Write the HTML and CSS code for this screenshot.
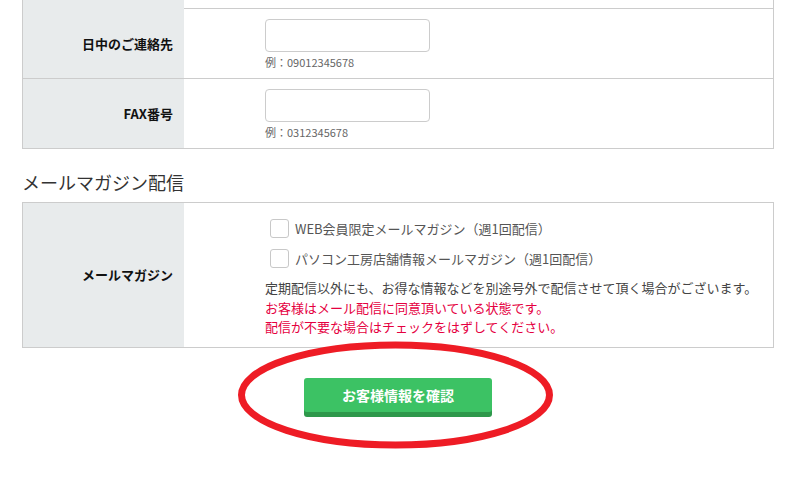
FILE: index.html
```html
<!DOCTYPE html>
<html lang="ja">
<head>
<meta charset="utf-8">
<title>お客様情報</title>
<link rel="stylesheet" href="styles.css">
</head>
<body>
<div class="page">
  <div class="form-table">
    <div class="row row-cut">
      <div class="label"></div>
      <div class="field"></div>
    </div>
    <div class="row">
      <div class="label">日中のご連絡先</div>
      <div class="field">
        <div class="input"></div>
        <div class="hint">例：09012345678</div>
      </div>
    </div>
    <div class="row">
      <div class="label">FAX番号</div>
      <div class="field">
        <div class="input"></div>
        <div class="hint">例：0312345678</div>
      </div>
    </div>
  </div>

  <h2 class="section-title">メールマガジン配信</h2>

  <div class="form-table">
    <div class="row">
      <div class="label">メールマガジン</div>
      <div class="field field-mail">
        <label class="check"><span class="box"></span><span>WEB会員限定メールマガジン（週1回配信）</span></label>
        <label class="check"><span class="box"></span><span>パソコン工房店舗情報メールマガジン（週1回配信）</span></label>
        <p class="note">定期配信以外にも、お得な情報などを別途号外で配信させて頂く場合がございます。<br><span class="red">お客様はメール配信に同意頂いている状態です。<br>配信が不要な場合はチェックをはずしてください。</span></p>
      </div>
    </div>
  </div>

  <div class="actions">
    <div class="btn-wrap">
      <button class="btn">お客様情報を確認</button>
      <svg class="circle" width="317" height="109" viewBox="0 0 317 109">
        <ellipse cx="158.5" cy="54" rx="154" ry="50" fill="none" stroke="#ee1c25" stroke-width="7"/>
      </svg>
    </div>
  </div>
</div>
</body>
</html>
```

FILE: styles.css
```css
* { box-sizing: border-box; }
html, body { margin: 0; padding: 0; background: #fff; }
body {
  font-family: "Noto Sans CJK JP", "Noto Sans", sans-serif;
  color: #333;
}
.page {
  width: 752px;
  margin-left: 22px;
  padding-bottom: 66px;
}
.form-table {
  border: 1px solid #cccccc;
  border-top: none;
}
.row {
  display: grid;
  grid-template-columns: 161px 1fr;
  border-top: 1px solid #cccccc;
}
.row-cut {
  border-top: none;
  height: 8px;
}
.label {
  background: #e8ebec;
  font-size: 13px;
  font-weight: bold;
  color: #111;
  text-align: right;
  padding-right: 11px;
  display: flex;
  align-items: center;
  justify-content: flex-end;
}
.field {
  padding: 10px 0 8px 81px;
}
.input {
  width: 165px;
  height: 33px;
  border: 1px solid #cccccc;
  border-radius: 4px;
  background: #fff;
}
.hint {
  font-size: 11px;
  line-height: 16px;
  color: #666;
  margin-top: 2px;
}
.section-title {
  margin: 20px 0 7px 0;
  font-size: 18px;
  line-height: 26px;
  font-weight: normal;
  color: #333;
}
.field-mail {
  padding: 10px 0 10px 81px;
}
.check {
  display: flex;
  align-items: center;
  height: 30px;
  font-size: 13px;
  color: #555;
  padding-left: 5px;
}
.box {
  width: 19px;
  height: 19px;
  border: 1px solid #c8c8c8;
  border-radius: 3px;
  background: #fff;
  margin-right: 6px;
  flex: none;
}
.note {
  margin: 5px 0 0 0;
  font-size: 13px;
  line-height: 19.5px;
  color: #444;
}
.red { color: #e5003f; }
.actions {
  display: flex;
  justify-content: center;
  padding-top: 30px;
}
.btn-wrap {
  position: relative;
  width: 188px;
  height: 39px;
}
.btn {
  display: block;
  width: 188px;
  height: 34px;
  border: none;
  border-radius: 3px;
  background: #3cc264;
  box-shadow: 0 5px 0 #2e984b;
  color: #fff;
  font-family: "Noto Sans CJK JP", sans-serif;
  font-size: 14px;
  font-weight: bold;
  padding: 0;
}
.circle {
  position: absolute;
  left: -67px;
  top: -37px;
  pointer-events: none;
}
```
